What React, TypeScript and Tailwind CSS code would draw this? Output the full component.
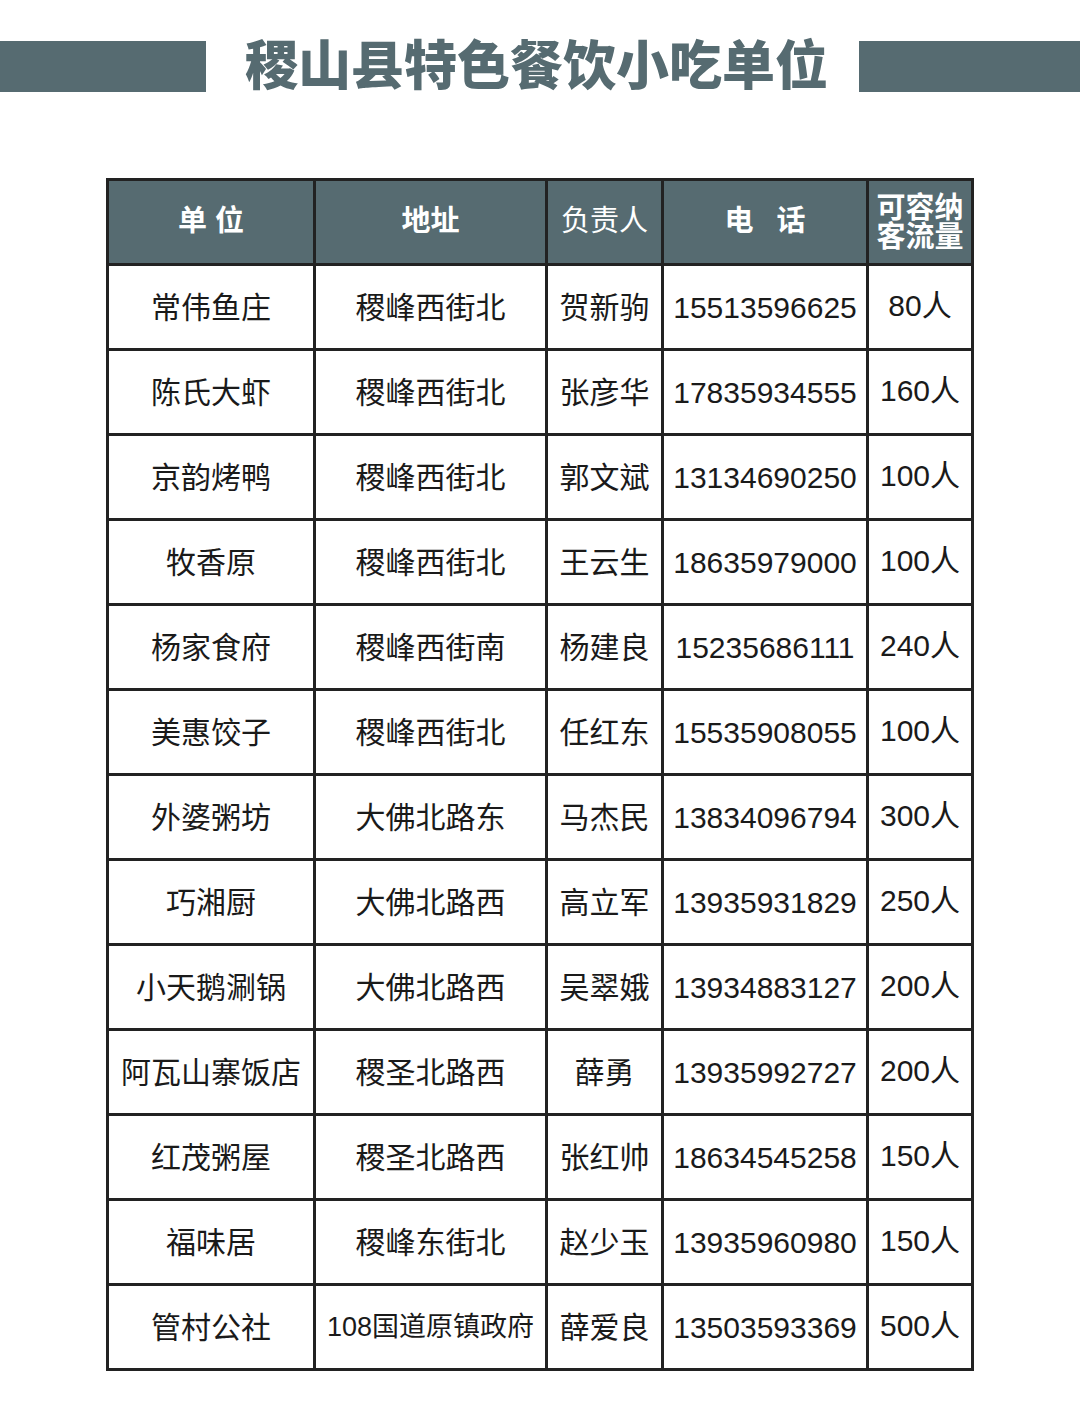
import React from 'react';

const rows = [
  ['常伟鱼庄', '稷峰西街北', '贺新驹', '15513596625', '80人'],
  ['陈氏大虾', '稷峰西街北', '张彦华', '17835934555', '160人'],
  ['京韵烤鸭', '稷峰西街北', '郭文斌', '13134690250', '100人'],
  ['牧香原', '稷峰西街北', '王云生', '18635979000', '100人'],
  ['杨家食府', '稷峰西街南', '杨建良', '15235686111', '240人'],
  ['美惠饺子', '稷峰西街北', '任红东', '15535908055', '100人'],
  ['外婆粥坊', '大佛北路东', '马杰民', '13834096794', '300人'],
  ['巧湘厨', '大佛北路西', '高立军', '13935931829', '250人'],
  ['小天鹅涮锅', '大佛北路西', '吴翠娥', '13934883127', '200人'],
  ['阿瓦山寨饭店', '稷圣北路西', '薛勇', '13935992727', '200人'],
  ['红茂粥屋', '稷圣北路西', '张红帅', '18634545258', '150人'],
  ['福味居', '稷峰东街北', '赵少玉', '13935960980', '150人'],
  ['管村公社', '108国道原镇政府', '薛爱良', '13503593369', '500人'],
];

const font = { fontFamily: '"Liberation Sans", "Noto Sans CJK SC", sans-serif' };

export default function App() {
  return (
    <div className="w-[1080px] h-[1415px] bg-white" style={font}>
      {/* Title bar */}
      <div className="flex items-center pt-[41px]">
        <div className="w-[206px] h-[51px] bg-[#566b71]" />
        <h1 className="flex-1 text-center text-[53px] leading-[51px] font-black text-[#566b71] pl-[8px]">
          稷山县特色餐饮小吃单位
        </h1>
        <div className="w-[221px] h-[51px] bg-[#566b71]" />
      </div>

      {/* Table */}
      <div className="pt-[86px] pl-[106px]">
        <table className="table-fixed border-collapse w-[865px] text-[#1a1a1a]">
          <colgroup>
            <col className="w-[207px]" />
            <col className="w-[232px]" />
            <col className="w-[116px]" />
            <col className="w-[205px]" />
            <col className="w-[105px]" />
          </colgroup>
          <thead>
            <tr className="h-[85px] bg-[#566b71] text-white text-[29px]">
              <th className="border-[3px] border-[#222] font-bold">单 位</th>
              <th className="border-[3px] border-[#222] font-bold">地址</th>
              <th className="border-[3px] border-[#222] font-normal">负责人</th>
              <th className="border-[3px] border-[#222] font-bold">
                <span className="inline-flex gap-[23px]">
                  <span>电</span>
                  <span>话</span>
                </span>
              </th>
              <th className="border-[3px] border-[#222] font-bold leading-[29px] pt-[2px]">
                可容纳
                <br />
                客流量
              </th>
            </tr>
          </thead>
          <tbody>
            {rows.map((r) => (
              <tr key={r[0]} className="h-[85px] text-[30px]">
                <td className="border-[3px] border-[#222] text-center whitespace-nowrap">{r[0]}</td>
                <td
                  className={`border-[3px] border-[#222] text-center whitespace-nowrap ${
                    r[1].length > 6 ? 'text-[27px]' : ''
                  }`}
                >
                  {r[1]}
                </td>
                <td className="border-[3px] border-[#222] text-center whitespace-nowrap">{r[2]}</td>
                <td className="border-[3px] border-[#222] text-center whitespace-nowrap">{r[3]}</td>
                <td className="border-[3px] border-[#222] text-center whitespace-nowrap pb-[4px]">{r[4]}</td>
              </tr>
            ))}
          </tbody>
        </table>
      </div>
    </div>
  );
}
